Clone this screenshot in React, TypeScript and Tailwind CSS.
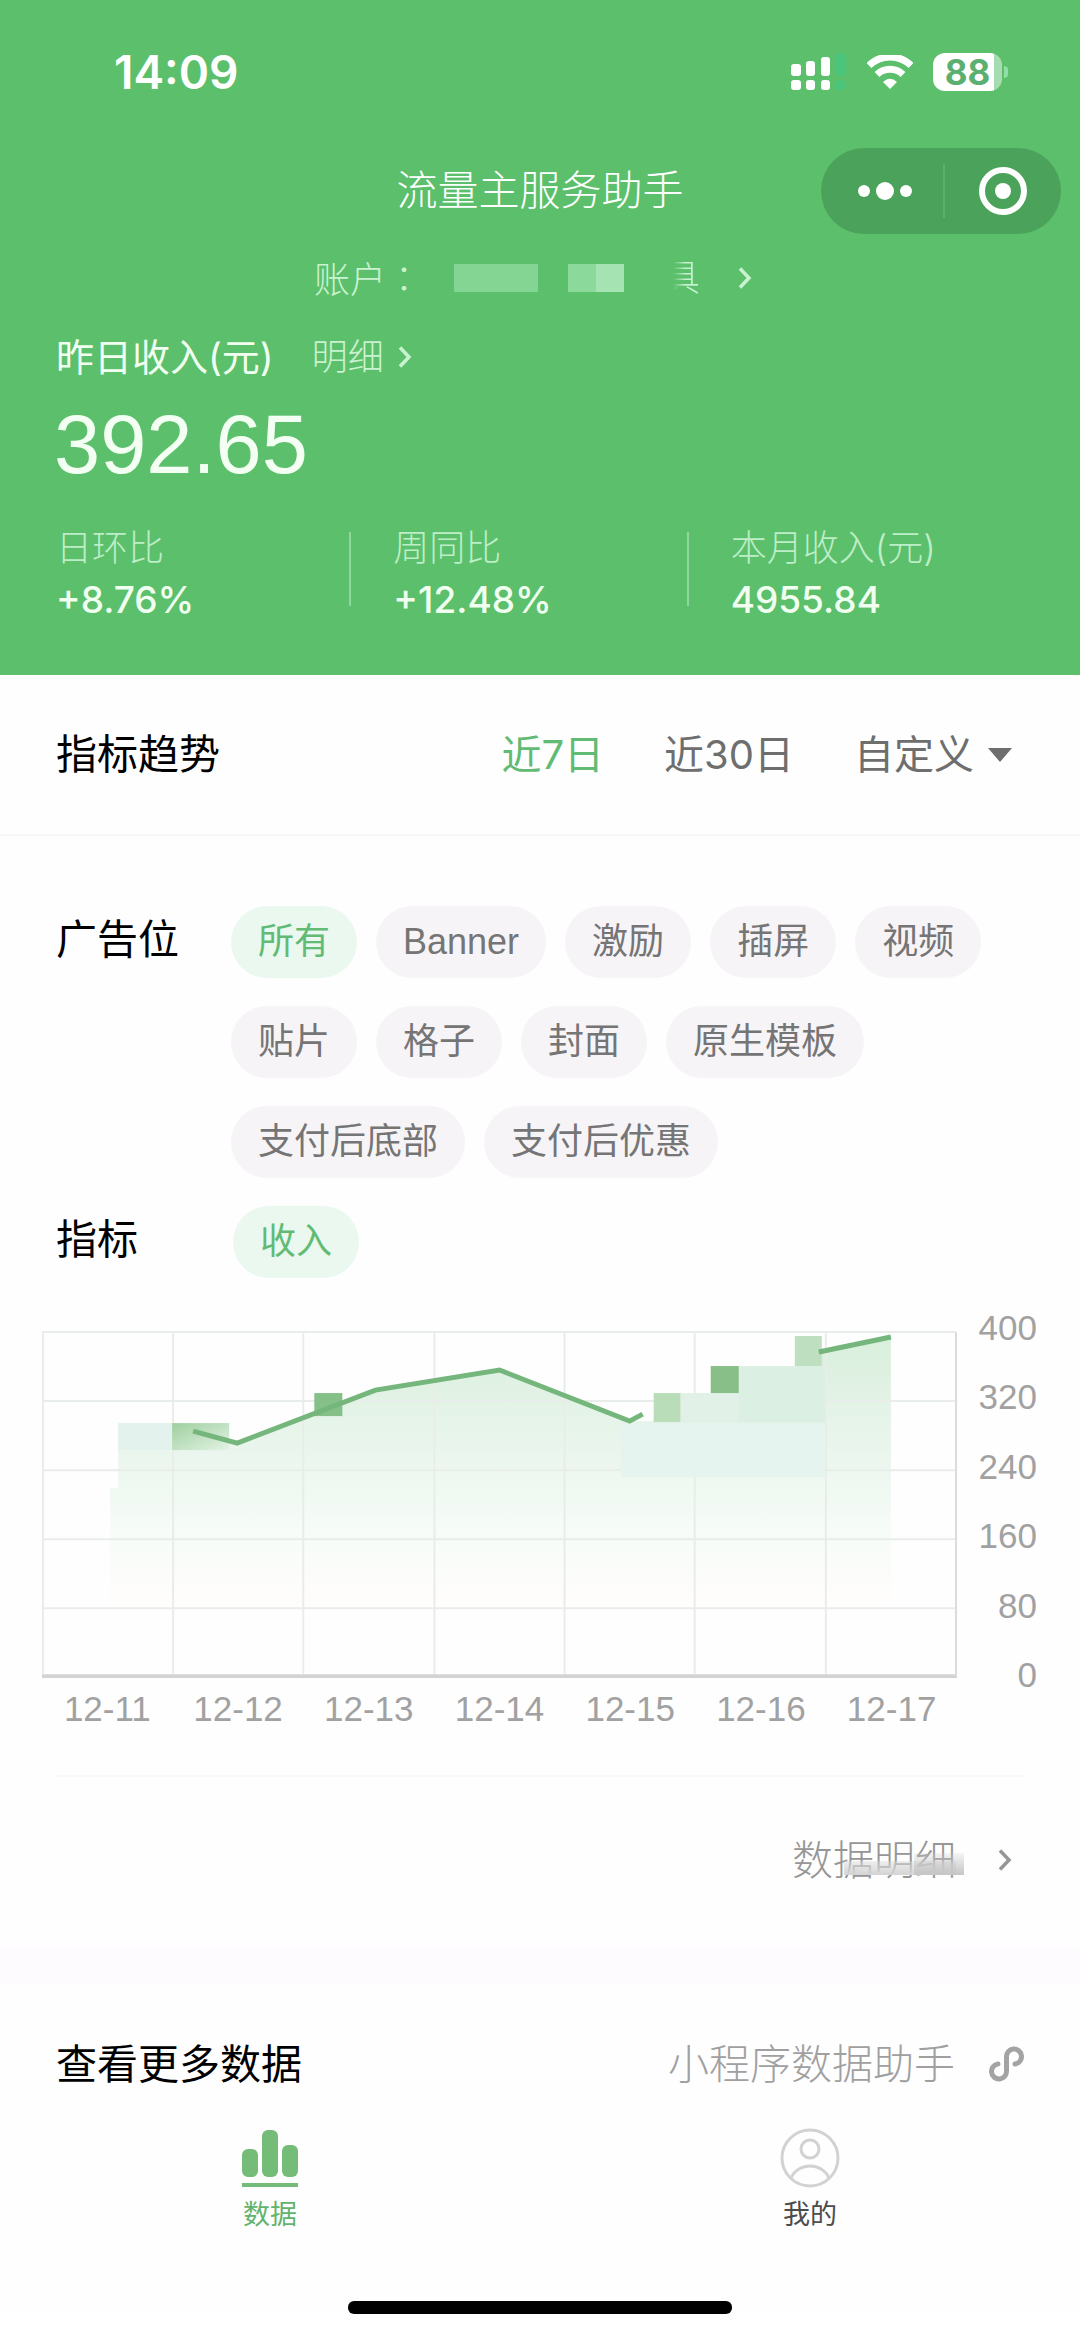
import { useState } from "react";

const slots = ["所有", "Banner", "激励", "插屏", "视频", "贴片", "格子", "封面", "原生模板", "支付后底部", "支付后优惠"];
const ranges = ["近7日", "近30日"];
const stats = [
  { label: "日环比", value: "+8.76%" },
  { label: "周同比", value: "+12.48%" },
  { label: "本月收入(元)", value: "4955.84" },
];
const days = ["12-11", "12-12", "12-13", "12-14", "12-15", "12-16", "12-17"];
const ticks = [400, 320, 240, 160, 80, 0];

const Chevron = ({ className = "" }: { className?: string }) => (
  <svg viewBox="0 0 14 22" fill="none" stroke="currentColor" strokeWidth="3.5" className={`h-[22px] w-3.5 ${className}`}>
    <path d="M2 1.500 L11 11 L2 20.500" />
  </svg>
);

const StatusBar = () => (
  <div className="flex h-36 items-center justify-between pr-[72px] pl-[114px]">
    <p className="font-['Inter'] text-[46px] font-semibold text-white">14:09</p>
    <div className="flex items-center gap-5">
      <svg viewBox="0 0 56 38" className="h-[38px] w-14">
        <g fill="#fff">
          <rect x="0" y="11" width="10" height="12" rx="3" />
          <rect x="15" y="8" width="9" height="15" rx="3" />
          <rect x="30" y="4" width="9" height="19" rx="3" />
          <rect x="0" y="27" width="10" height="10" rx="3" />
          <rect x="15" y="27" width="9" height="10" rx="3" />
          <rect x="30" y="27" width="9" height="10" rx="3" />
        </g>
        <g fill="#4bc57b">
          <rect x="45" y="0" width="9" height="23" rx="3" />
          <rect x="45" y="27" width="9" height="10" rx="3" />
        </g>
      </svg>
      <svg viewBox="0 0 46 34" fill="none" stroke="#fff" className="h-[34px] w-[46px]">
        <path d="M2 10.500 A30 30 0 0 1 44 10.500" strokeWidth="7" />
        <path d="M10 19.500 A19 19 0 0 1 36 19.500" strokeWidth="7" />
        <path d="M16 27 Q23 20.500 30 27 L23 34 Z" fill="#fff" stroke="none" />
      </svg>
      <div className="flex items-center gap-0.5">
        <div className="flex h-[38px] w-[69px] items-center justify-center rounded-xl bg-linear-to-r from-white from-88% to-[#a5dcb0] to-88% font-['Inter'] text-[35px] font-bold text-[#5bb070]">
          88
        </div>
        <div className="h-3 w-1 rounded-r-full bg-[#8fe0a5]" />
      </div>
    </div>
  </div>
);

const Capsule = () => (
  <div className="flex h-[86px] w-60 items-center rounded-full bg-[#4ba25b] text-white">
    <button aria-label="更多" className="flex h-full flex-1 items-center justify-center gap-1.5 pl-1.5">
      <span className="size-3 rounded-full bg-white" />
      <span className="size-[18px] rounded-full bg-white" />
      <span className="size-3 rounded-full bg-white" />
    </button>
    <span className="h-[54px] w-0.5 bg-[#5eae6c]" />
    <button aria-label="关闭" className="flex h-full flex-1 items-center justify-center">
      <span className="flex size-12 items-center justify-center rounded-full border-[6px] border-white">
        <span className="size-4 rounded-full bg-white" />
      </span>
    </button>
  </div>
);

const Pill = ({ text, active, onClick }: { text: string; active: boolean; onClick?: () => void }) => (
  <button
    onClick={onClick}
    className={`h-[72px] rounded-full px-[27px] font-['Liberation_Sans','Noto_Sans_CJK_SC',sans-serif] text-[36px] ${active ? "bg-[#eaf8f0] text-[#62bb74]" : "bg-[#f7f4f7] text-[#757575]"}`}
  >
    {text}
  </button>
);

const Chart = () => (
  <div className="mt-[52px] flex pr-[43px] pl-[42px]">
    <div className="min-w-0 flex-1">
      <svg viewBox="0 0 914 348" className="block w-full">
        <defs>
          <linearGradient id="area" x1="0" y1="0" x2="0" y2="1">
            <stop offset="0" stopColor="#d9efdc" />
            <stop offset="0.45" stopColor="#ebf6ee" />
            <stop offset="0.75" stopColor="#f7fcf8" />
            <stop offset="1" stopColor="#fffdfc" />
          </linearGradient>
          <linearGradient id="fade" x1="0" y1="0" x2="1" y2="1">
            <stop offset="0" stopColor="#9fcf9f" />
            <stop offset="1" stopColor="#e3f3e5" />
          </linearGradient>
        </defs>
        <path
          d="M76 93 H130 L153 99 L195 113 L333 60 L457 40 L587 91 H638 V63 H696 V36 H779 V22 L848 7 V272 H68 V158 H76 Z"
          fill="url(#area)"
        />
        <g stroke="#e9ede9" strokeWidth="2">
          {[2, 71, 140, 209, 278].map((y) => (
            <path key={y} d={`M0 ${y} H913`} />
          ))}
          {[1, 131, 261, 392, 522, 652, 783].map((x) => (
            <path key={x} d={`M${x} 2 V344`} />
          ))}
        </g>
        {/* blocky patches along the line */}
        <rect x="76" y="93" width="54" height="27" fill="#e4f2ee" />
        <rect x="130" y="93" width="57" height="27" fill="url(#fade)" />
        <rect x="272" y="63" width="28" height="23" fill="#84c087" />
        <rect x="611" y="63" width="27" height="29" fill="#b9ddb8" />
        <rect x="638" y="63" width="144" height="30" fill="#e1f1e7" />
        <rect x="578" y="93" width="204" height="54" fill="#e6f4ef" />
        <rect x="696" y="36" width="86" height="56" fill="#dcefe3" />
        <rect x="668" y="36" width="28" height="27" fill="#88bf88" />
        <rect x="752" y="6" width="27" height="30" fill="#bfe0c0" />
        <g fill="none" stroke="#74b67c" strokeWidth="5">
          <path d="M151 101 L195 113 L333 60 L457 40 L587 91 L600 84" />
          <path d="M776 22 L848 7" />
        </g>
        <path d="M0 346 H914" stroke="#d3d3d3" strokeWidth="4" />
        <path d="M913 2 V346" stroke="#dcdcdc" strokeWidth="2" />
      </svg>
      <div className="mt-2 grid grid-cols-7 text-center font-['Liberation_Sans'] text-[35px] leading-[46px] text-[#a1a1a1]">
        {days.map((d) => (
          <span key={d}>{d}</span>
        ))}
      </div>
    </div>
    <div className="-mt-[25px] flex h-[393px] w-20 flex-col justify-between text-right font-['Liberation_Sans'] text-[35px] leading-[46px] text-[#a1a1a1]">
      {ticks.map((t) => (
        <span key={t}>{t}</span>
      ))}
    </div>
  </div>
);

export default function App() {
  const [range, setRange] = useState("近7日");
  const [slot, setSlot] = useState("所有");

  return (
    <div className="bg-[#fefefe] font-['Inter','Noto_Sans_CJK_SC',sans-serif] text-black">
      <header className="bg-[#5cbf6b] pb-[49px]">
        <StatusBar />
        <div className="grid h-[94px] grid-cols-[1fr_auto_1fr] items-center px-[19px]">
          <h1 className="col-start-2 text-[41px] font-light text-white">流量主服务助手</h1>
          <div className="flex justify-end">
            <Capsule />
          </div>
        </div>
        <button className="mx-auto mt-3.5 flex h-[52px] w-[452px] items-center text-[36px] font-light text-[#c9f2d0]">
          <span>
            账户<span className="font-['Noto_Sans_CJK_TC']">：</span>
          </span>
          <span className="ml-8 h-7 w-[84px] bg-[#84d594]" />
          <span className="ml-[30px] h-7 w-7 bg-[#8bd99b]" />
          <span className="h-7 w-7 bg-[#a6e3b3]" />
          <span className="ml-10 bg-linear-to-r from-transparent from-25% to-[#c9f2d0] to-60% bg-clip-text text-transparent">具</span>
          <Chevron className="ml-[38px]" />
        </button>
        <div className="mt-[26px] flex h-[54px] items-center px-14">
          <h2 className="text-[38px] text-[#f0fff0]">昨日收入(元)</h2>
          <button className="ml-[38px] flex items-center gap-3.5 text-[36px] font-light text-[#c9f2d0]">
            明细
            <Chevron />
          </button>
        </div>
        <p className="mt-4 px-[54px] font-['Liberation_Sans'] text-[83px] leading-[90px] text-[#f2fff2]">392.65</p>
        <dl className="mt-8 grid grid-cols-3 items-center pr-3 pl-14">
          {stats.map((s, i) => (
            <div key={s.label} className="relative">
              {i > 0 && <span className="absolute top-2.5 -left-[44px] h-[74px] w-0.5 bg-[#8fd79b]" />}
              <dt className="text-[36px] leading-[52px] font-light text-[#bdeec7]">{s.label}</dt>
              <dd className="text-[37px] leading-[52px] font-medium text-[#f0fff0]">{s.value}</dd>
            </div>
          ))}
        </dl>
      </header>

      <main>
        <section className="flex h-[161px] items-center border-b-2 border-[#f7f7f7] pr-[68px] pl-14">
          <h2 className="text-[41px]">指标趋势</h2>
          <div className="ml-auto flex items-center gap-[60px] text-[40px] text-[#6e6e6e]">
            {ranges.map((r) => (
              <button key={r} onClick={() => setRange(r)} className={r === range ? "text-[#62bb74]" : ""}>
                {r}
              </button>
            ))}
            <button className="flex items-center gap-3.5">
              自定义
              <span className="border-x-12 border-t-14 border-x-transparent border-t-[#6e6e6e]" />
            </button>
          </div>
        </section>

        <section className="mt-[70px] flex pr-12 pl-14">
          <h3 className="w-[175px] shrink-0 text-[41px] leading-[66px]">广告位</h3>
          <div className="flex flex-wrap gap-x-[19px] gap-y-7">
            {slots.map((s) => (
              <Pill key={s} text={s} active={s === slot} onClick={() => setSlot(s)} />
            ))}
          </div>
        </section>
        <section className="mt-7 flex px-14">
          <h3 className="w-[177px] shrink-0 text-[41px] leading-[66px]">指标</h3>
          <Pill text="收入" active />
        </section>

        <Chart />

        <section className="mx-14 mt-[43px] border-t-2 border-[#f9f9f9] pt-[51px]">
          <button className="ml-auto flex h-16 items-center gap-[42px] pr-3 text-[41px] font-light text-[#969696]">
            <span className="relative">
              数据明细
              <span className="absolute right-0 bottom-4 h-3.5 w-[112px] bg-linear-to-b from-[#d8d8d8]/40 to-[#d4d4d4]" />
              <span className="absolute -right-2 bottom-4 h-[22px] w-[50px] bg-linear-to-b from-[#cfcfcf]/20 to-[#c6c6c6]" />
            </span>
            <Chevron />
          </button>
        </section>
        <div className="mt-14 h-9 bg-[#fefbfe]" />
        <section className="mt-12 flex h-16 items-center justify-between pr-[55px] pl-14">
          <h2 className="text-[41px]">查看更多数据</h2>
          <a href="#assistant" className="flex items-center gap-[34px] text-[41px] font-light text-[#a0a0a0]">
            小程序数据助手
            <svg viewBox="0 0 36 36" fill="none" stroke="#a3a3a3" strokeWidth="5" strokeLinecap="round" className="size-9">
              <path d="M9 18 A7.500 7.500 0 1 0 17.500 25 V11 A7.500 7.500 0 1 1 26 18" />
            </svg>
          </a>
        </section>
      </main>

      <nav className="mt-[29px] grid grid-cols-2 text-[27px]">
        <button className="flex flex-col items-center gap-1.5 text-[#62b36d]">
          <svg viewBox="0 0 58 64" className="h-16 w-[58px]" fill="#74bc78">
            <rect x="1" y="24" width="16" height="28" rx="6" />
            <rect x="21" y="5" width="16" height="47" rx="6" />
            <rect x="41" y="20" width="16" height="32" rx="6" />
            <rect x="1" y="58" width="56" height="4" />
          </svg>
          数据
        </button>
        <button className="flex flex-col items-center gap-1.5 text-[#4c4c4c]">
          <svg viewBox="0 0 64 64" className="size-16" fill="none" stroke="#d2d2d2" strokeWidth="3">
            <circle cx="32" cy="33" r="28" />
            <circle cx="32" cy="24" r="9" />
            <path d="M13 53 C20 37 44 37 51 53" />
          </svg>
          我的
        </button>
      </nav>
      <div className="mx-auto mt-[65px] mb-[23px] h-[13px] w-96 rounded-md bg-black" />
    </div>
  );
}
